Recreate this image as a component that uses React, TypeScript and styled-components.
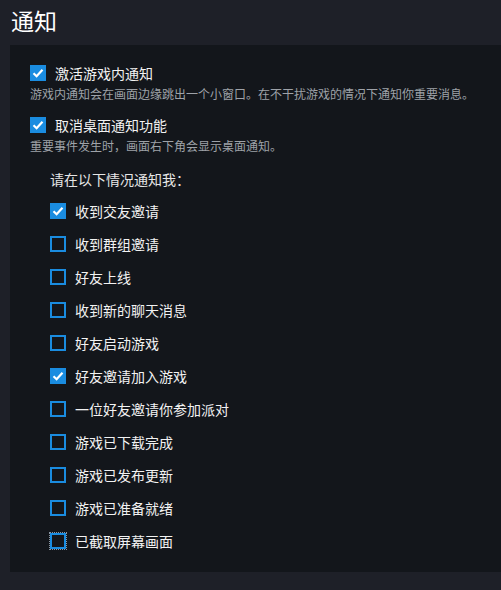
import React from 'react';
import styled, { createGlobalStyle } from 'styled-components';

const GlobalStyle = createGlobalStyle`
  html, body {
    margin: 0;
    background: #1e2028;
  }
  body {
    font-family: "Noto Sans CJK SC", "Noto Sans", sans-serif;
  }
`;

const Page_ = styled.div`
  background: #1e2028;
  min-height: 590px;
  padding-bottom: 19px;
`;

const Title_ = styled.h1`
  color: #ffffff;
  font-size: 23px;
  font-weight: 400;
  height: 45px;
  line-height: 40px;
  margin: 0;
  padding-left: 11px;
  box-sizing: border-box;
`;

const Panel_ = styled.div`
  background: #13161b;
  margin-left: 10px;
  padding: 20px 0 23px 20px;
`;

const Row_ = styled.div`
  align-items: center;
  display: flex;
  gap: 9px;
  height: 16px;
`;

const Box_ = styled.span<{ $checked: boolean; $focused?: boolean }>`
  align-items: center;
  background: ${p => (p.$checked ? '#1a8ce0' : 'transparent')};
  border: 2px solid #1a8ce0;
  box-sizing: border-box;
  display: flex;
  flex: none;
  height: 16px;
  justify-content: center;
  outline: ${p => (p.$focused ? '1px dotted #8a96a3' : 'none')};
  width: 16px;
`;

const Label_ = styled.span`
  color: #f2f2f2;
  font-size: 14px;
  line-height: 16px;
`;

const Desc_ = styled.div<{ $last?: boolean }>`
  color: #9ea2a8;
  font-size: 12px;
  line-height: 16px;
  margin: 5px 0 ${p => (p.$last ? '0' : '15px')};
  white-space: nowrap;
`;

const Sub_ = styled.div`
  padding-left: 20px;
`;

const SubHead_ = styled.div`
  color: #e6e6e6;
  font-size: 14px;
  line-height: 18px;
  margin: 16px 0 15px;
`;

const List_ = styled.div`
  display: flex;
  flex-direction: column;
  gap: 17px;
`;

const Check = () => (
  <svg width="12" height="10" viewBox="0 0 12 10">
    <path d="M1.5 5.2 L4.6 8.2 L10.5 1.8" fill="none" stroke="#ffffff" strokeWidth="2.2" />
  </svg>
);

interface CheckboxProps {
  label: string;
  checked: boolean;
  focused?: boolean;
}

const Checkbox = ({ label, checked, focused }: CheckboxProps) => (
  <Row_>
    <Box_ $checked={checked} $focused={focused}>{checked && <Check />}</Box_>
    <Label_>{label}</Label_>
  </Row_>
);

const items: [string, boolean][] = [
  ['收到交友邀请', true],
  ['收到群组邀请', false],
  ['好友上线', false],
  ['收到新的聊天消息', false],
  ['好友启动游戏', false],
  ['好友邀请加入游戏', true],
  ['一位好友邀请你参加派对', false],
  ['游戏已下载完成', false],
  ['游戏已发布更新', false],
  ['游戏已准备就绪', false],
  ['已截取屏幕画面', false],
];

export default function App() {
  return (
    <Page_>
      <GlobalStyle />
      <Title_>通知</Title_>
      <Panel_>
        <Checkbox label="激活游戏内通知" checked />
        <Desc_>游戏内通知会在画面边缘跳出一个小窗口。在不干扰游戏的情况下通知你重要消息。</Desc_>
        <Checkbox label="取消桌面通知功能" checked />
        <Desc_ $last>重要事件发生时，画面右下角会显示桌面通知。</Desc_>
        <Sub_>
          <SubHead_>请在以下情况通知我：</SubHead_>
          <List_>
            {items.map(([label, checked], i) => (
              <Checkbox
                key={label}
                label={label}
                checked={checked}
                focused={i === items.length - 1}
              />
            ))}
          </List_>
        </Sub_>
      </Panel_>
    </Page_>
  );
}
